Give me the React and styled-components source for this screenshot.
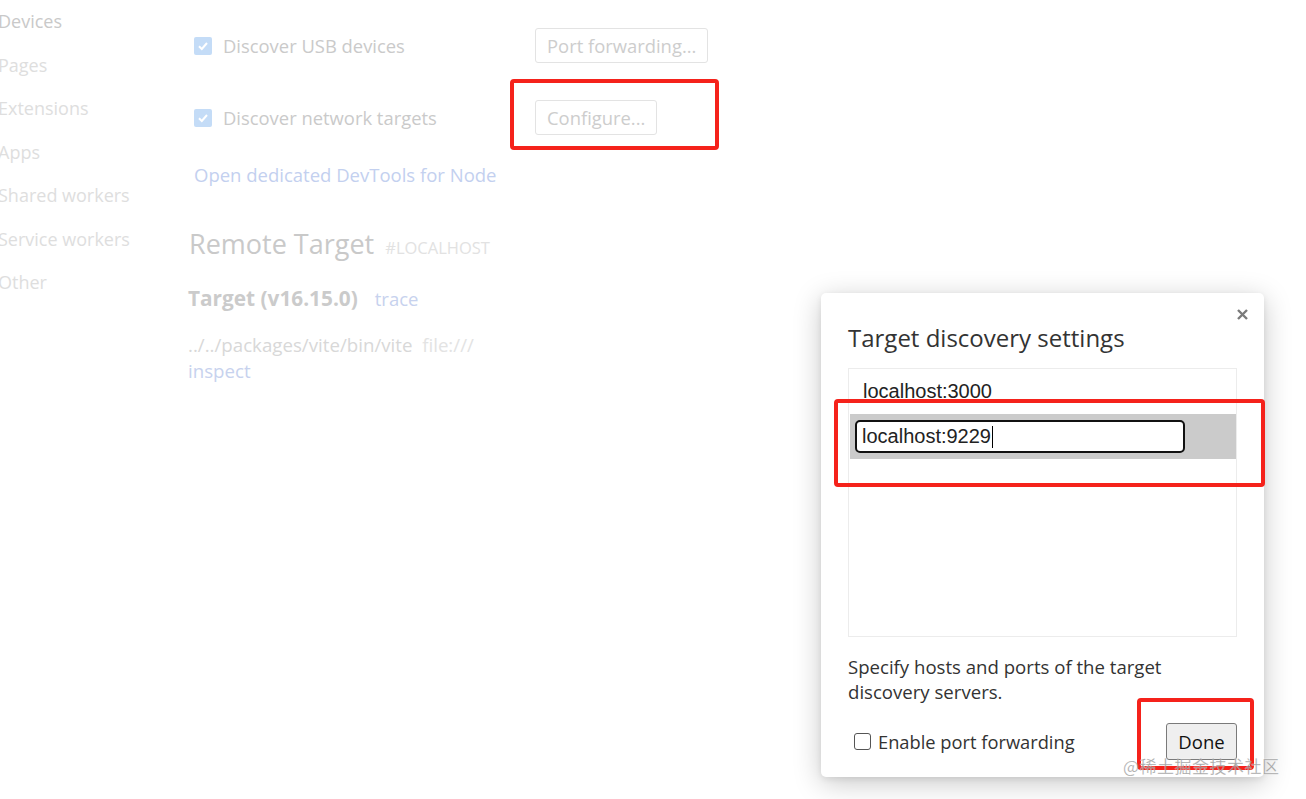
import React from "react";
import styled, { createGlobalStyle } from "styled-components";

const GlobalStyle = createGlobalStyle`
  html, body {
    margin: 0;
    padding: 0;
    background: #fff;
    overflow: hidden;
  }
  body {
    font-family: "Open Sans", "Noto Sans", sans-serif;
  }
`;

const Page = styled.div`
  position: relative;
  width: 1306px;
  height: 799px;
  display: flex;
  overflow: hidden;
`;

const Sidebar = styled.nav`
  width: 190px;
  flex-shrink: 0;
  margin-left: -2px;
  display: flex;
  flex-direction: column;
  padding-top: 4px;
`;

const SideItem = styled.div`
  height: 43.5px;
  line-height: 34px;
  font-size: 18px;
  color: ${(p) => (p.$active ? "#c9c9c9" : "#dedede")};
  white-space: nowrap;
`;

const Content = styled.main`
  flex: 1;
  display: flex;
  flex-direction: column;
  padding-top: 28px;
`;

const OptionRow = styled.div`
  display: flex;
  align-items: center;
  height: 35px;
  margin-bottom: ${(p) => p.$gap || 0}px;
  padding-left: 6px;
`;

const FadedCheck = styled.span`
  width: 18px;
  height: 18px;
  border-radius: 2px;
  background: #c4dcf7;
  display: flex;
  align-items: center;
  justify-content: center;
  margin-right: 11px;
`;

const OptionLabel = styled.span`
  width: 312px;
  font-size: 18.4px;
  color: #cacaca;
  white-space: nowrap;
`;

const GhostButton = styled.button`
  height: 35px;
  padding: 0 11px;
  background: #fff;
  border: 1px solid #e3e3e3;
  border-radius: 3px;
  font-family: inherit;
  font-size: 18.4px;
  color: #cdcdcd;
`;

const FadedLink = styled.a`
  margin: 28px 0 0 6px;
  font-size: 18.5px;
  color: #c3d0ef;
  line-height: 24px;
`;

const SectionTitle = styled.h2`
  margin: 40px 0 0 1px;
  font-size: 27px;
  font-weight: 400;
  line-height: 34px;
  color: #c9c9c9;
  display: flex;
  align-items: baseline;
  gap: 11px;
`;

const SectionTag = styled.span`
  font-size: 16.5px;
  color: #e2e2e2;
`;

const TargetHead = styled.div`
  margin-top: 20px;
  display: flex;
  align-items: baseline;
  gap: 17px;
  font-size: 18.5px;
  line-height: 26px;
`;

const TargetName = styled.span`
  font-size: 20.8px;
  font-weight: 700;
  color: #cbcbcb;
`;

const FaintLink = styled.span`
  color: ${(p) => (p.$pale ? "#e3e3e3" : "#c7d2ee")};
`;

const TargetPath = styled.div`
  margin-top: 20px;
  width: 320px;
  font-size: 18.7px;
  line-height: 26px;
  color: #d8d8d8;
`;

const Dialog = styled.div`
  position: absolute;
  left: 821px;
  top: 293px;
  width: 443px;
  height: 484px;
  box-sizing: border-box;
  background: #fff;
  border-radius: 5px;
  box-shadow: 0 6px 28px rgba(0, 0, 0, 0.22), 0 2px 6px rgba(0, 0, 0, 0.08);
  padding: 29px 27px 17px 27px;
  display: flex;
  flex-direction: column;
`;

const CloseButton = styled.button`
  position: absolute;
  top: 13px;
  right: 14px;
  width: 16px;
  height: 16px;
  padding: 0;
  border: none;
  background: none;
  display: flex;
  align-items: center;
  justify-content: center;
`;

const DialogTitle = styled.h3`
  margin: 0;
  font-size: 24px;
  font-weight: 400;
  line-height: 32px;
  color: #333;
`;

const TargetList = styled.div`
  margin-top: 14px;
  width: 389px;
  height: 269px;
  flex-shrink: 0;
  box-sizing: border-box;
  border: 1px solid #ececec;
  padding: 0 0 0 1px;
  display: flex;
  flex-direction: column;
`;

const ListItem = styled.div`
  height: 45px;
  display: flex;
  align-items: center;
  padding-left: ${(p) => (p.$selected ? 5 : 13)}px;
  background: ${(p) => (p.$selected ? "#cbcbcb" : "transparent")};
  font-family: "Liberation Sans", Arial, sans-serif;
  font-size: 20px;
  color: #222;
`;

const EditBox = styled.div`
  width: 330px;
  height: 33px;
  box-sizing: border-box;
  border: 2px solid #111;
  border-radius: 5px;
  background: #fff;
  display: flex;
  align-items: center;
  padding-left: 5px;
  font-family: "Liberation Sans", Arial, sans-serif;
  font-size: 20px;
  color: #222;
`;

const Caret = styled.span`
  width: 1px;
  height: 22px;
  background: #000;
  margin-left: 1px;
`;

const HelpText = styled.p`
  margin: 17px 0 0 0;
  font-size: 18.6px;
  line-height: 25px;
  color: #333;
`;

const DialogFooter = styled.div`
  margin-top: auto;
  display: flex;
  align-items: center;
  justify-content: space-between;
`;

const CheckLabel = styled.label`
  display: flex;
  align-items: center;
  gap: 7px;
  padding-left: 6px;
  font-size: 18.3px;
  color: #333;
`;

const EmptyCheck = styled.span`
  width: 17px;
  height: 17px;
  box-sizing: border-box;
  border: 1.5px solid #555;
  border-radius: 3px;
  background: #fff;
`;

const DoneButton = styled.button`
  width: 71px;
  height: 37px;
  background: #efefef;
  border: 1px solid #7a7a7a;
  border-radius: 3px;
  font-family: inherit;
  font-size: 18.5px;
  color: #111;
  padding: 0;
`;

const Mark = styled.div`
  position: absolute;
  left: ${(p) => p.$x}px;
  top: ${(p) => p.$y}px;
  width: ${(p) => p.$w}px;
  height: ${(p) => p.$h}px;
  box-sizing: border-box;
  border: 4px solid #f5221b;
  border-radius: 4px;
  pointer-events: none;
`;

const Watermark = styled.div`
  position: absolute;
  left: 1123px;
  top: 754px;
  font-family: "Noto Sans CJK SC", sans-serif;
  font-size: 17px;
  line-height: 24px;
  color: rgba(140, 140, 140, 0.75);
  -webkit-text-stroke: 0.3px rgba(255, 255, 255, 0.6);
  letter-spacing: 0.5px;
`;

const CheckIcon = () => (
  <svg width="12" height="12" viewBox="0 0 12 12">
    <path d="M2 6.3 L4.8 9 L10 3" fill="none" stroke="#fff" strokeWidth="2" />
  </svg>
);

const CloseIcon = () => (
  <svg width="13" height="13" viewBox="0 0 13 13">
    <path d="M2 2 L11 11 M11 2 L2 11" stroke="#7a7a7a" strokeWidth="2.4" />
  </svg>
);

const sideItems = ["Devices", "Pages", "Extensions", "Apps", "Shared workers", "Service workers", "Other"];

export default function App() {
  return (
    <Page>
      <GlobalStyle />
      <Sidebar>
        {sideItems.map((item, i) => (
          <SideItem key={item} $active={i === 0}>
            {item}
          </SideItem>
        ))}
      </Sidebar>
      <Content>
        <OptionRow $gap={37}>
          <FadedCheck>
            <CheckIcon />
          </FadedCheck>
          <OptionLabel>Discover USB devices</OptionLabel>
          <GhostButton>Port forwarding...</GhostButton>
        </OptionRow>
        <OptionRow>
          <FadedCheck>
            <CheckIcon />
          </FadedCheck>
          <OptionLabel>Discover network targets</OptionLabel>
          <GhostButton>Configure...</GhostButton>
        </OptionRow>
        <FadedLink>Open dedicated DevTools for Node</FadedLink>
        <SectionTitle>
          Remote Target <SectionTag>#LOCALHOST</SectionTag>
        </SectionTitle>
        <TargetHead>
          <TargetName>Target (v16.15.0)</TargetName>
          <FaintLink>trace</FaintLink>
        </TargetHead>
        <TargetPath>
          ../../packages/vite/bin/vite&nbsp; <FaintLink $pale>file:///</FaintLink>
          <br />
          <FaintLink>inspect</FaintLink>
        </TargetPath>
      </Content>

      <Dialog>
        <CloseButton>
          <CloseIcon />
        </CloseButton>
        <DialogTitle>Target discovery settings</DialogTitle>
        <TargetList>
          <ListItem>localhost:3000</ListItem>
          <ListItem $selected>
            <EditBox>
              localhost:9229
              <Caret />
            </EditBox>
          </ListItem>
        </TargetList>
        <HelpText>
          Specify hosts and ports of the target
          <br />
          discovery servers.
        </HelpText>
        <DialogFooter>
          <CheckLabel>
            <EmptyCheck />
            Enable port forwarding
          </CheckLabel>
          <DoneButton>Done</DoneButton>
        </DialogFooter>
      </Dialog>

      <Mark $x={510} $y={79} $w={209} $h={71} />
      <Mark $x={834} $y={399} $w={431} $h={88} />
      <Mark $x={1137} $y={698} $w={117} $h={72} />
      <Watermark>@稀土掘金技术社区</Watermark>
    </Page>
  );
}
